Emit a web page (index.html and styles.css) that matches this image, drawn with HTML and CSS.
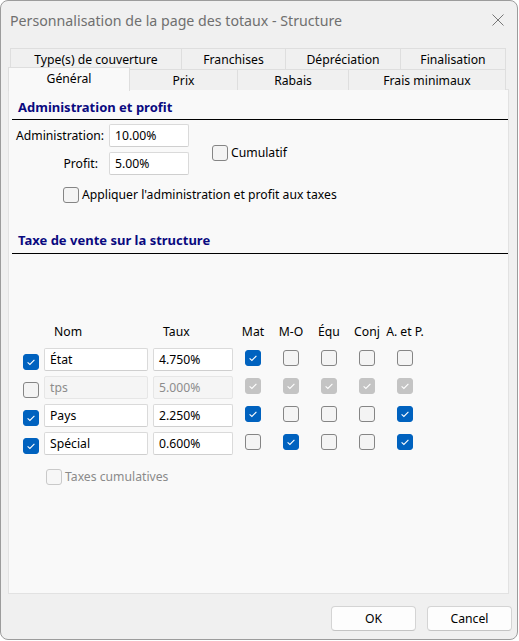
FILE: index.html
```html
<!DOCTYPE html>
<html lang="fr">
<head>
<meta charset="utf-8">
<title>Personnalisation de la page des totaux - Structure</title>
<link rel="stylesheet" href="styles.css">
</head>
<body>
<div class="window">
  <div class="titlebar">
    <span class="title">Personnalisation de la page des totaux - Structure</span>
    <svg class="close" width="12" height="12" viewBox="0 0 12 12"><path d="M0.5 0.5L11.5 11.5M11.5 0.5L0.5 11.5"/></svg>
  </div>
  <div class="main">
    <div class="tabs">
      <div class="tabrow back">
        <div class="tab t1">Type(s) de couverture</div>
        <div class="tab t2">Franchises</div>
        <div class="tab t3">Dépréciation</div>
        <div class="tab t4">Finalisation</div>
      </div>
      <div class="tabrow front">
        <div class="tab active t5">Général</div>
        <div class="tab t6">Prix</div>
        <div class="tab t7">Rabais</div>
        <div class="tab t8">Frais minimaux</div>
      </div>
    </div>
    <div class="panel">
      <div class="section-title first">Administration et profit</div>
      <div class="admin">
        <div class="admin-grid">
          <label class="lbl">Administration:</label>
          <div class="input w80">10.00%</div>
          <label class="lbl profit">Profit:</label>
          <div class="input w80">5.00%</div>
        </div>
        <div class="check-label cumul">
          <span class="cb"></span><span>Cumulatif</span>
        </div>
      </div>
      <div class="check-label apply">
        <span class="cb"></span><span>Appliquer l'administration et profit aux taxes</span>
      </div>

      <div class="section-title second">Taxe de vente sur la structure</div>

      <div class="tax-grid">
        <div class="hdr"></div>
        <div class="hdr left">Nom</div>
        <div class="hdr left">Taux</div>
        <div class="hdr">Mat</div>
        <div class="hdr">M-O</div>
        <div class="hdr">Équ</div>
        <div class="hdr">Conj</div>
        <div class="hdr">A. et P.</div>

        <div class="cell first-col"><span class="cb on"><svg viewBox="0 0 16 16"><path d="M4.6 8.3L6.9 10.5L11.4 5.9"/></svg></span></div>
        <div class="cell"><div class="input w104">État</div></div>
        <div class="cell"><div class="input w80">4.750%</div></div>
        <div class="cell c"><span class="cb on"><svg viewBox="0 0 16 16"><path d="M4.6 8.3L6.9 10.5L11.4 5.9"/></svg></span></div>
        <div class="cell c"><span class="cb"></span></div>
        <div class="cell c"><span class="cb"></span></div>
        <div class="cell c"><span class="cb"></span></div>
        <div class="cell c"><span class="cb"></span></div>

        <div class="cell first-col"><span class="cb"></span></div>
        <div class="cell"><div class="input w104 disabled">tps</div></div>
        <div class="cell"><div class="input w80 disabled">5.000%</div></div>
        <div class="cell c"><span class="cb dis"><svg viewBox="0 0 16 16"><path d="M4.6 8.3L6.9 10.5L11.4 5.9"/></svg></span></div>
        <div class="cell c"><span class="cb dis"><svg viewBox="0 0 16 16"><path d="M4.6 8.3L6.9 10.5L11.4 5.9"/></svg></span></div>
        <div class="cell c"><span class="cb dis"><svg viewBox="0 0 16 16"><path d="M4.6 8.3L6.9 10.5L11.4 5.9"/></svg></span></div>
        <div class="cell c"><span class="cb dis"><svg viewBox="0 0 16 16"><path d="M4.6 8.3L6.9 10.5L11.4 5.9"/></svg></span></div>
        <div class="cell c"><span class="cb dis"><svg viewBox="0 0 16 16"><path d="M4.6 8.3L6.9 10.5L11.4 5.9"/></svg></span></div>

        <div class="cell first-col"><span class="cb on"><svg viewBox="0 0 16 16"><path d="M4.6 8.3L6.9 10.5L11.4 5.9"/></svg></span></div>
        <div class="cell"><div class="input w104">Pays</div></div>
        <div class="cell"><div class="input w80">2.250%</div></div>
        <div class="cell c"><span class="cb on"><svg viewBox="0 0 16 16"><path d="M4.6 8.3L6.9 10.5L11.4 5.9"/></svg></span></div>
        <div class="cell c"><span class="cb"></span></div>
        <div class="cell c"><span class="cb"></span></div>
        <div class="cell c"><span class="cb"></span></div>
        <div class="cell c"><span class="cb on"><svg viewBox="0 0 16 16"><path d="M4.6 8.3L6.9 10.5L11.4 5.9"/></svg></span></div>

        <div class="cell first-col"><span class="cb on"><svg viewBox="0 0 16 16"><path d="M4.6 8.3L6.9 10.5L11.4 5.9"/></svg></span></div>
        <div class="cell"><div class="input w104">Spécial</div></div>
        <div class="cell"><div class="input w80">0.600%</div></div>
        <div class="cell c"><span class="cb"></span></div>
        <div class="cell c"><span class="cb on"><svg viewBox="0 0 16 16"><path d="M4.6 8.3L6.9 10.5L11.4 5.9"/></svg></span></div>
        <div class="cell c"><span class="cb"></span></div>
        <div class="cell c"><span class="cb"></span></div>
        <div class="cell c"><span class="cb on"><svg viewBox="0 0 16 16"><path d="M4.6 8.3L6.9 10.5L11.4 5.9"/></svg></span></div>
      </div>

      <div class="check-label cumtax">
        <span class="cb disabled-empty"></span><span>Taxes cumulatives</span>
      </div>
    </div>
  </div>
  <div class="footer">
    <button class="btn">OK</button>
    <button class="btn">Cancel</button>
  </div>
</div>
</body>
</html>
```

FILE: styles.css
```css
* { box-sizing: border-box; }
html, body { margin: 0; padding: 0; background: #ffffff; }
body {
  font-family: "Noto Sans", "Open Sans", sans-serif;
  font-size: 12.2px;
  color: #000;
}
.window {
  width: 518px;
  height: 640px;
  border: 1px solid #9c9c9c;
  border-radius: 8px;
  background: #f0f0f0;
  display: flex;
  flex-direction: column;
  overflow: hidden;
}
.titlebar {
  height: 39px;
  display: flex;
  align-items: center;
  justify-content: space-between;
  padding: 0 13px 1px 9px;
}
.title {
  font-size: 14.2px;
  color: #6f6f6f;
}
.close { stroke: #777; stroke-width: 1; fill: none; }

.main { padding: 8px 0 0 7px; }
.tabs { display: flex; flex-direction: column; }
.tabrow { display: flex; }
.tabrow.back { margin-left: 2px; height: 21px; }
.tabrow.front { margin-top: -2px; height: 23px; align-items: flex-end; position: relative; z-index: 1; }
.tab {
  height: 21px;
  border: 1px solid #dedede;
  border-bottom: none;
  margin-right: -1px;
  background: #f0f0f0;
  display: flex;
  align-items: center;
  justify-content: center;
  line-height: 1;
  padding-top: 3px;
}
.tab.active {
  height: 24px;
  margin-bottom: -1px;
  background: #f9f9f9;
  padding-top: 0;
  padding-bottom: 1px;
  position: relative;
  z-index: 2;
}
.t1 { width: 172px; }
.t2 { width: 105px; }
.t3 { width: 116px; }
.t4 { width: 106px; }
.t5 { width: 122px; }
.t6 { width: 109px; }
.t7 { width: 112px; }
.t8 { width: 158px; }

.panel {
  width: 501px;
  height: 505px;
  margin-top: -1px;
  background: #f9f9f9;
  border: 1px solid #e2e2e2;
}
.section-title {
  margin-left: 3px;
  padding: 9px 0 4px 6px;
  line-height: 16px;
  font-weight: bold;
  font-size: 13px;
  color: #0a0a80;
  border-bottom: 1px solid #000;
}
.section-title.second { margin-top: 21px; padding-top: 8px; padding-bottom: 5px; }

.admin { display: flex; align-items: center; margin-top: 4px; padding-left: 7px; }
.admin-grid {
  display: grid;
  grid-template-columns: 86px 80px;
  column-gap: 7px;
  row-gap: 5px;
  align-items: center;
}
.lbl { text-align: right; white-space: nowrap; }
.lbl.profit { padding-right: 4px; }
.input {
  height: 23px;
  background: #fff;
  border: 1px solid #dadada;
  border-bottom-color: #cfcfcf;
  border-radius: 2px;
  padding-left: 5px;
  display: flex;
  align-items: center;
  white-space: nowrap;
}
.input.disabled { background: #f5f5f5; border-color: #e6e6e6; color: #8c8c8c; }
.w80 { width: 80px; }
.w104 { width: 104px; }

.check-label { display: flex; align-items: center; gap: 3px; }
.cumul { margin-left: 23px; margin-top: 6px; }
.apply { margin-left: 54px; margin-top: 11px; }
.cumtax { margin-left: 37px; margin-top: 13px; color: #8a8a8a; }

.cb {
  width: 16px;
  height: 16px;
  border: 1px solid #858585;
  border-radius: 3px;
  background: #f4f4f4;
  display: inline-flex;
  flex: none;
}
.cb svg { width: 100%; height: 100%; stroke: #fff; stroke-width: 1.1; fill: none; }
.cb.on { background: #0062bf; border-color: #0062bf; }
.cb.dis { background: #c4c4c4; border-color: #c4c4c4; }
.cb.disabled-empty { border-color: #c9c9c9; background: #f7f7f7; }
.cb.on svg, .cb.dis svg { margin: -1px; width: 16px; height: 16px; }

.tax-grid {
  display: grid;
  grid-template-columns: 21px 109px 81px repeat(5, 38px);
  grid-template-rows: 20px repeat(4, 23px);
  row-gap: 5px;
  margin-top: 69px;
  margin-left: 14px;
  align-items: center;
}
.hdr { text-align: center; white-space: nowrap; align-self: start; }
.hdr.left { text-align: left; padding-left: 10px; }
.cell { display: flex; align-items: center; height: 23px; }
.cell.c { justify-content: center; }
.cell.c .cb { margin-top: -3px; }
.first-col .cb { margin-top: 4px; }

.footer {
  flex: 1;
  display: flex;
  justify-content: flex-end;
  align-items: flex-start;
  gap: 11px;
  padding: 12px 5px 0 0;
}
.btn {
  font-family: inherit;
  font-size: 12.2px;
  color: #000;
  height: 25px;
  width: 85px;
  background: #fdfdfd;
  border: 1px solid #d4d4d4;
  border-bottom-color: #c4c4c4;
  border-radius: 4px;
  padding: 0;
}
```
